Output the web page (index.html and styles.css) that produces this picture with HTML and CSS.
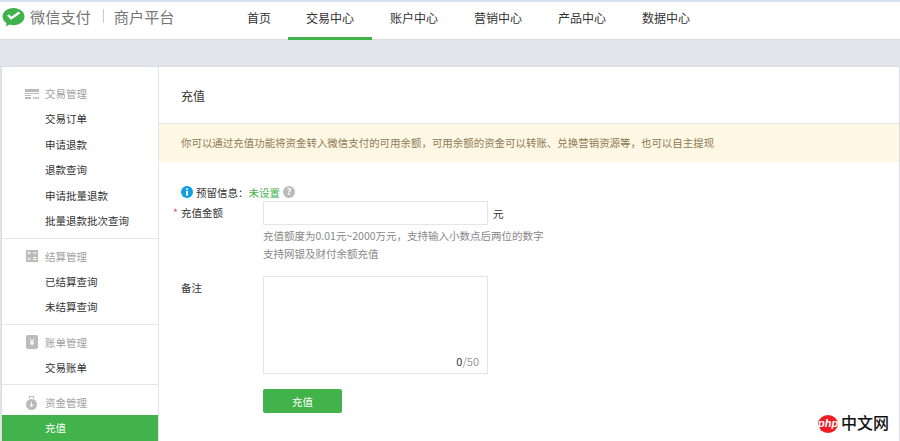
FILE: index.html
```html
<!DOCTYPE html>
<html lang="zh-CN">
<head>
    <meta charset="UTF-8" />
    <title>微信支付商户平台</title>
    <link rel="stylesheet" href="styles.css">
</head>
<body>
<header class="topbar">
    <div class="brand">
        <svg class="brand-logo" width="24" height="20" viewBox="0 0 24 20">
            <path d="M12.5 1C6.4 1 1.5 4.8 1.5 9.5c0 2.700 1.600 5 4 6.500L5 19.500l3.600-1.900c1.200.4 2.500.6 3.900.6 6.100 0 11-3.800 11-8.700S18.600 1 12.500 1z" fill="#3fb34a"/>
            <path d="M7 8l3.200 3.200 8.300-5.700" fill="none" stroke="#fff" stroke-width="2.400"/>
        </svg>
        <span class="brand-name">微信支付</span>
        <span class="brand-sep"></span>
        <span class="brand-name">商户平台</span>
    </div>
    <nav class="mainnav">
        <a class="nav-item nav-home">首页</a>
        <a class="nav-item active">交易中心</a>
        <a class="nav-item">账户中心</a>
        <a class="nav-item">营销中心</a>
        <a class="nav-item">产品中心</a>
        <a class="nav-item">数据中心</a>
    </nav>
</header>

<div class="page">
    <aside class="sidebar">
        <div class="menu-group first">
            <div class="menu-title">
                <svg width="15" height="10" viewBox="0 0 15 10"><path d="M0 0h14v3H0zM0 4h14v1H0zM0 6h6v1H0zM0 8h6v2H0zM8 8h1.500v2H8zM10.500 8h1.500v2h-1.500zM12.500 8h1.500v2h-1.500z" fill="#bbb"/></svg>
                <span>交易管理</span>
            </div>
            <a class="menu-item">交易订单</a>
            <a class="menu-item">申请退款</a>
            <a class="menu-item">退款查询</a>
            <a class="menu-item">申请批量退款</a>
            <a class="menu-item">批量退款批次查询</a>
        </div>
        <div class="menu-group">
            <div class="menu-title">
                <svg width="15" height="12" viewBox="0 0 15 12"><rect x="1" width="12" height="12" fill="#bbb"/><path d="M2.500 3h3M4 1.500v3M8 3h3.500M2.800 7.500l2.400 2.400M5.200 7.500l-2.400 2.400M8 7.500h3.500M8 9.500h3.500" stroke="#fff" fill="none"/></svg>
                <span>结算管理</span>
            </div>
            <a class="menu-item">已结算查询</a>
            <a class="menu-item">未结算查询</a>
        </div>
        <div class="menu-group">
            <div class="menu-title">
                <svg width="15" height="14" viewBox="0 0 15 14"><rect x="1" width="12" height="14" rx="2" fill="#bbb"/><path d="M4.800 3.500L7 6.300l2.200-2.800M7 6.300V10.500M5 7h4M5 8.800h4" stroke="#fff" fill="none"/></svg>
                <span>账单管理</span>
            </div>
            <a class="menu-item">交易账单</a>
        </div>
        <div class="menu-group">
            <div class="menu-title">
                <svg width="15" height="14" viewBox="0 0 15 14"><circle cx="6.500" cy="8.500" r="5.500" fill="#bbb"/><path d="M4.500 2.500v-2h4v2" fill="none" stroke="#bbb" stroke-width="1.200"/><path d="M6.500 6v4.500M4.500 8.500l2 2 2-2" stroke="#fff" fill="none"/></svg>
                <span>资金管理</span>
            </div>
            <a class="menu-item current">充值</a>
        </div>
    </aside>

    <main class="content">
        <h1 class="content-title">充值</h1>
        <div class="notice">你可以通过充值功能将资金转入微信支付的可用余额，可用余额的资金可以转账、兑换营销资源等，也可以自主提现</div>
        <div class="reserve">
            <svg width="12" height="12" viewBox="0 0 12 12"><circle cx="6" cy="6" r="6" fill="#10a0e6"/><path d="M5 2.500h2v1.600H5zM5 5h2v4.500H5z" fill="#fff"/></svg>
            <span class="reserve-label">预留信息：</span><span class="reserve-value">未设置</span>
            <span class="help">?</span>
        </div>
        <div class="form-row amount-row">
            <label class="form-label"><span class="required">*</span>充值金额</label>
            <div class="form-field">
                <div class="amount-line">
                    <input class="amount-input" type="text" />
                    <span class="unit">元</span>
                </div>
                <p class="hint">充值额度为0.01元~2000万元，支持输入小数点后两位的数字</p>
                <p class="hint">支持网银及财付余额充值</p>
            </div>
        </div>
        <div class="form-row remark-row">
            <label class="form-label">备注</label>
            <div class="form-field">
                <div class="remark-box">
                    <div class="counter"><span class="counter-now">0</span>/50</div>
                </div>
                <button class="submit-btn" type="button">充值</button>
            </div>
        </div>
    </main>
</div>

<div class="watermark">
    <span class="wm-badge">php</span><span class="wm-text">中文网</span>
</div>
</body>
</html>
```

FILE: styles.css
```css
html, body {
    margin: 0;
    padding: 0;
    height: 441px;
    overflow: hidden;
}
body {
    font-family: "Noto Sans CJK SC", "Liberation Sans", sans-serif;
    font-size: 10.5px;
    color: #333;
    background-color: #e4e5ea;
    position: relative;
}
a {
    display: block;
}

/* top bar */
.topbar {
    display: flex;
    height: 37px;
    background-color: #fff;
    border-top: 2px solid #d3e0ee;
    border-bottom: 1px solid #dcdde1;
}
.brand {
    display: flex;
    align-items: center;
    width: 247px;
    height: 30px;
    padding-left: 1px;
    box-sizing: border-box;
}
.brand-logo {
    margin-right: 5px;
}
.brand-name {
    font-size: 15.2px;
    color: #777;
    margin-bottom: 2px;
}
.brand-sep {
    width: 1px;
    height: 14px;
    margin: 0 10px 2px 12px;
    background-color: #ccc;
}
.mainnav {
    display: flex;
}
.nav-item {
    width: 84px;
    box-sizing: border-box;
    height: 38px;
    padding-top: 7px;
    text-align: center;
    font-size: 12px;
    line-height: 18px;
    color: #333;
}
.nav-home {
    width: 41px;
    text-align: left;
}
.nav-item.active {
    border-bottom: 3px solid #41b34a;
}

/* page frame */
.page {
    display: flex;
    margin: 26px 0 0 1px;
    height: 376px;
    background-color: #fff;
    border-top: 1px solid #dcdde1;
    border-left: 1px solid #dcdde1;
    border-right: 1px solid #dcdde1;
}
.sidebar {
    width: 156px;
    flex: none;
    border-right: 1px solid #e4e5ea;
}
.menu-group {
    border-top: 1px solid #e4e5ea;
    padding: 5px 0 4px;
}
.menu-group:last-child {
    padding-bottom: 0;
}
.menu-group.first {
    border-top: none;
    padding-top: 14px;
}
.menu-title {
    display: flex;
    align-items: center;
    height: 25px;
    padding-left: 23px;
    color: #a0a0a0;
}
.menu-title svg {
    margin-right: 5px;
}
.menu-item {
    height: 25.5px;
    line-height: 25px;
    padding-left: 43px;
    color: #333;
}
.menu-item.current {
    background-color: #41b34a;
    color: #fff;
}

/* main panel */
.content {
    flex: 1;
}
.content-title {
    height: 56px;
    margin: 0;
    padding-left: 22px;
    font-size: 12px;
    font-weight: normal;
    line-height: 57px;
    border-bottom: 1px solid #e4e5ea;
}
.notice {
    height: 38px;
    line-height: 38px;
    padding-left: 22px;
    background-color: #fdf7e4;
    color: #8d7a56;
    font-size: 10.46px;
}
.reserve {
    display: flex;
    align-items: center;
    height: 16px;
    margin: 22px 0 0 22px;
}
.reserve svg {
    margin-right: 3px;
}
.reserve-value {
    color: #41b34a;
}
.help {
    width: 12px;
    height: 12px;
    margin-left: 3px;
    border-radius: 50%;
    background-color: #bbb;
    color: #fff;
    font-size: 9px;
    line-height: 12px;
    text-align: center;
    font-weight: bold;
}
.form-row {
    display: flex;
}
.amount-row {
    margin-top: 1px;
}
.form-label {
    width: 104px;
    padding: 4px 0 0 22px;
    box-sizing: border-box;
    line-height: 16px;
    position: relative;
}
.required {
    position: absolute;
    left: 14px;
    top: 4px;
    color: #e0575c;
}
.amount-line {
    display: flex;
    align-items: center;
}
.amount-input {
    width: 225px;
    height: 24px;
    box-sizing: border-box;
    padding: 0;
    border: 1px solid #e4e5ea;
    background-color: #fff;
}
.unit {
    margin-left: 5px;
}
.hint {
    margin: 0;
    height: 18px;
    line-height: 18px;
    color: #888;
}
.amount-line + .hint {
    margin-top: 2px;
}
.remark-row {
    margin-top: 13px;
}
.remark-box {
    position: relative;
    width: 225px;
    height: 98px;
    box-sizing: border-box;
    border: 1px solid #e4e5ea;
}
.counter {
    position: absolute;
    right: 8px;
    bottom: 3px;
    font-size: 11px;
    line-height: 18px;
    color: #999;
}
.counter-now {
    color: #333;
}
.submit-btn {
    display: block;
    width: 79px;
    height: 24px;
    margin-top: 15px;
    padding: 0;
    background-color: #41b34a;
    border: none;
    border-radius: 2px;
    color: #fff;
    font-family: inherit;
    font-size: 10.5px;
}

/* image watermark in the corner */
.watermark {
    position: absolute;
    left: 818px;
    top: 413px;
    display: flex;
    align-items: center;
}
.wm-badge {
    width: 20px;
    height: 18px;
    border-radius: 50%;
    background-color: #ee1c25;
    color: #fff;
    font: italic bold 11px/17px "Liberation Sans", sans-serif;
    text-align: center;
    margin-right: 3px;
}
.wm-text {
    font-size: 16px;
    font-weight: 500;
    line-height: 18px;
    color: #111;
    margin-bottom: 3px;
}
```
